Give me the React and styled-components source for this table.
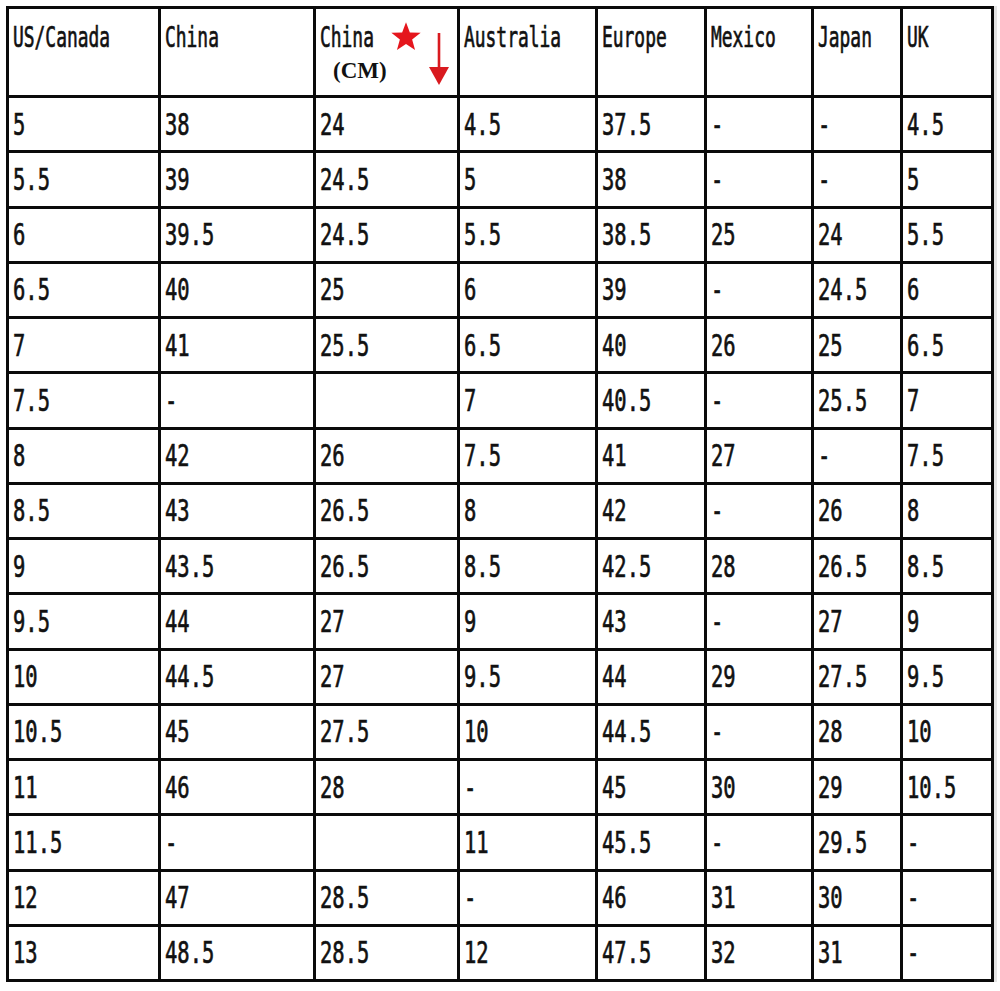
import React from 'react'
import styled, { createGlobalStyle } from 'styled-components'

const GlobalStyle = createGlobalStyle`
    html, body {
        margin: 0;
        padding: 0;
        background: #ffffff;
    }
`

const columns = ['US/Canada', 'China', 'China', 'Australia', 'Europe', 'Mexico', 'Japan', 'UK']

const rows = [
    ['5', '38', '24', '4.5', '37.5', '-', '-', '4.5'],
    ['5.5', '39', '24.5', '5', '38', '-', '-', '5'],
    ['6', '39.5', '24.5', '5.5', '38.5', '25', '24', '5.5'],
    ['6.5', '40', '25', '6', '39', '-', '24.5', '6'],
    ['7', '41', '25.5', '6.5', '40', '26', '25', '6.5'],
    ['7.5', '-', '', '7', '40.5', '-', '25.5', '7'],
    ['8', '42', '26', '7.5', '41', '27', '-', '7.5'],
    ['8.5', '43', '26.5', '8', '42', '-', '26', '8'],
    ['9', '43.5', '26.5', '8.5', '42.5', '28', '26.5', '8.5'],
    ['9.5', '44', '27', '9', '43', '-', '27', '9'],
    ['10', '44.5', '27', '9.5', '44', '29', '27.5', '9.5'],
    ['10.5', '45', '27.5', '10', '44.5', '-', '28', '10'],
    ['11', '46', '28', '-', '45', '30', '29', '10.5'],
    ['11.5', '-', '', '11', '45.5', '-', '29.5', '-'],
    ['12', '47', '28.5', '-', '46', '31', '30', '-'],
    ['13', '48.5', '28.5', '12', '47.5', '32', '31', '-'],
]

function App() {
    return (
        <Page>
            <GlobalStyle />
            <Chart>
                {columns.map((title, i) => (
                    <HeadCell key={'h' + i}>
                        <Label $head>{title}</Label>
                        {i === 2 && (
                            <>
                                <Unit>(CM)</Unit>
                                <Star viewBox="0 0 24 24">
                                    <polygon points="12,1 14.9,8.6 23,8.9 16.6,13.9 18.8,21.8 12,17.2 5.2,21.8 7.4,13.9 1,8.9 9.1,8.6" />
                                </Star>
                                <Arrow viewBox="0 0 20 52">
                                    <rect x="8.7" y="0" width="2.6" height="36" />
                                    <polygon points="0,34 20,34 10,52" />
                                </Arrow>
                            </>
                        )}
                    </HeadCell>
                ))}
                {rows.map((row, r) =>
                    row.map((value, c) => (
                        <Cell key={r + '-' + c}>
                            <Label>{value}</Label>
                        </Cell>
                    ))
                )}
            </Chart>
        </Page>
    )
}

const Page = styled.div`
    width: 1000px;
    height: 991px;
    padding: 6px 0 0 6px;
    box-sizing: border-box;
    background: #ffffff;
`

const Chart = styled.div`
    display: grid;
    grid-template-columns: 149px 152px 141px 135px 106px 104px 86px 88px;
    grid-template-rows: 86px repeat(16, 1fr);
    gap: 3px;
    padding: 3px 0 3px 3px;
    width: 988px;
    height: 976px;
    box-sizing: border-box;
    background: #0a0a0a;
    box-shadow: 3px 0 0 #e4e4e4;
`

const Cell = styled.div`
    background: #ffffff;
    display: flex;
    align-items: center;
    padding-left: 4px;
    overflow: hidden;
`

const HeadCell = styled.div`
    position: relative;
    background: #ffffff;
    padding: 15px 0 0 4px;
    overflow: hidden;
`

const Label = styled.span`
    display: inline-block;
    font-family: "DejaVu Sans Mono", "Liberation Mono", monospace;
    font-weight: normal;
    -webkit-text-stroke: 0.7px #111111;
    font-size: ${p => (p.$head ? '28px' : '31px')};
    line-height: 1;
    color: #111111;
    white-space: nowrap;
    transform: scaleX(${p => (p.$head ? 0.64 : 0.66)});
    transform-origin: left center;
`

const Unit = styled.div`
    font-family: "Liberation Serif", "Times New Roman", serif;
    font-weight: bold;
    font-size: 23px;
    line-height: 1;
    color: #111111;
    margin: 7px 0 0 13px;
`

const Star = styled.svg`
    position: absolute;
    left: 74px;
    top: 12px;
    width: 32px;
    height: 32px;
    fill: #e5161d;
`

const Arrow = styled.svg`
    position: absolute;
    left: 113px;
    top: 24px;
    width: 20px;
    height: 52px;
    fill: #d91a1f;
`

export default App
